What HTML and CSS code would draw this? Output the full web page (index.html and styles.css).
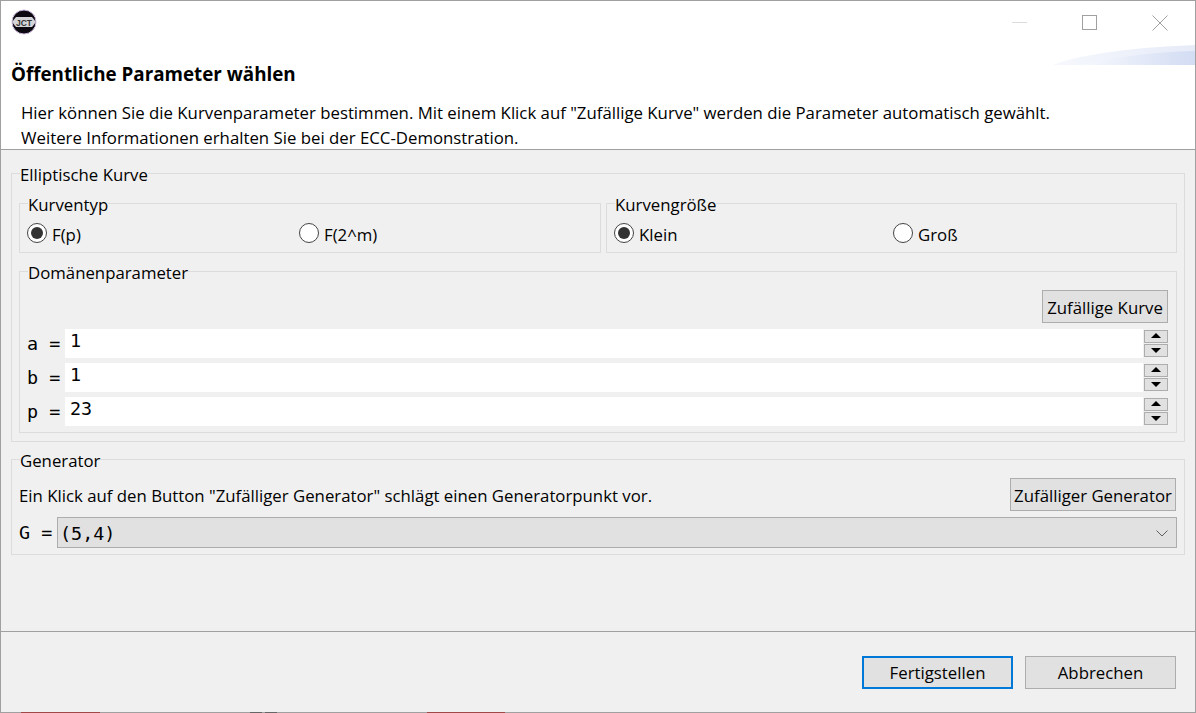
FILE: index.html
```html
<!DOCTYPE html>
<html lang="de">
<head>
  <meta charset="UTF-8">
  <title>Öffentliche Parameter wählen</title>
  <link rel="stylesheet" href="styles.css">
</head>
<body>
  <div class="window">
    <div class="top">
      <div class="titlebar">
        <svg class="logo" width="26" height="26" viewBox="0 0 26 26">
          <circle cx="13" cy="13" r="12" fill="#0c0a10" stroke="#cdb8e0" stroke-width="1"/>
          <path d="M1 13 L5 8 H21 L25 13 L21 18 H5 Z" fill="#d4d4d8"/>
          <text x="13" y="16.5" text-anchor="middle" class="logo-text">JCT</text>
        </svg>
        <div class="winbuttons">
          <svg width="16" height="16" viewBox="0 0 16 16"><path d="M0 7.5H15" stroke="#dcdcdc"/></svg>
          <svg width="16" height="16" viewBox="0 0 16 16"><rect x="0.5" y="0.5" width="14" height="14" fill="none" stroke="#a0a0a0"/></svg>
          <svg width="16" height="16" viewBox="0 0 16 16"><path d="M0.5 0.5L15.5 15.5M15.5 0.5L0.5 15.5" stroke="#a0a0a0"/></svg>
        </div>
      </div>
      <svg class="swoosh" width="142" height="21" viewBox="0 0 142 21">
        <defs>
          <linearGradient id="sw1"><stop offset="0" stop-color="#f6f8fd"/><stop offset="1" stop-color="#e6ebf8"/></linearGradient>
          <linearGradient id="sw2"><stop offset="0" stop-color="#f6f8fd"/><stop offset="1" stop-color="#d2dcf3"/></linearGradient>
        </defs>
        <path d="M0 20C30 8 90 2 142 0V20Z" fill="url(#sw1)"/>
        <path d="M30 20C60 12 100 7 142 6V20Z" fill="url(#sw2)"/>
      </svg>
      <h1 class="title">Öffentliche Parameter wählen</h1>
      <p class="desc">Hier können Sie die Kurvenparameter bestimmen. Mit einem Klick auf "Zufällige Kurve" werden die Parameter automatisch gewählt.<br>Weitere Informationen erhalten Sie bei der ECC-Demonstration.</p>
    </div>

    <div class="main">
      <fieldset class="group outer curve">
        <legend>Elliptische Kurve</legend>
        <div class="pair">
          <fieldset class="group kind">
            <legend>Kurventyp</legend>
            <div class="radios radios-type">
              <label class="radio"><span class="dot on"></span>F(p)</label>
              <label class="radio"><span class="dot"></span>F(2^m)</label>
            </div>
          </fieldset>
          <fieldset class="group size">
            <legend>Kurvengröße</legend>
            <div class="radios radios-size">
              <label class="radio"><span class="dot on"></span>Klein</label>
              <label class="radio"><span class="dot"></span>Groß</label>
            </div>
          </fieldset>
        </div>
        <fieldset class="group domain">
          <legend>Domänenparameter</legend>
          <div class="btn-row"><button class="btn btn-curve">Zufällige Kurve</button></div>
          <div class="param">
            <span class="mono name">a =</span>
            <div class="field mono">1</div>
            <div class="spin"><span class="arrow up"></span><span class="arrow down"></span></div>
          </div>
          <div class="param">
            <span class="mono name">b =</span>
            <div class="field mono">1</div>
            <div class="spin"><span class="arrow up"></span><span class="arrow down"></span></div>
          </div>
          <div class="param">
            <span class="mono name">p =</span>
            <div class="field mono">23</div>
            <div class="spin"><span class="arrow up"></span><span class="arrow down"></span></div>
          </div>
        </fieldset>
      </fieldset>

      <fieldset class="group outer generator">
        <legend>Generator</legend>
        <div class="gen-row">
          <span class="gen-text">Ein Klick auf den Button "Zufälliger Generator" schlägt einen Generatorpunkt vor.</span>
          <button class="btn btn-gen">Zufälliger Generator</button>
        </div>
        <div class="gen-select">
          <span class="mono gname">G =</span>
          <div class="combo mono">(5,4)
            <svg width="12" height="7" viewBox="0 0 12 7"><path d="M0.5 0.5L6 6L11.5 0.5" fill="none" stroke="#606060"/></svg>
          </div>
        </div>
      </fieldset>
    </div>

    <div class="footer">
      <button class="btn btn-foot btn-default">Fertigstellen</button>
      <button class="btn btn-foot">Abbrechen</button>
    </div>
    <div class="edge"></div>
  </div>
</body>
</html>
```

FILE: styles.css
```css
* {
  box-sizing: border-box;
}

body {
  margin: 0;
  height: 100vh;
  font-family: "Open Sans", sans-serif;
  font-size: 16.8px;
  color: #000;
}

.window {
  height: 713px;
  display: flex;
  flex-direction: column;
  border: 1px solid #a0a0a0;
  border-bottom: 0;
  background: #f0f0f0;
  overflow: hidden;
}

.top {
  position: relative;
  height: 149px;
  background: #fff;
  border-bottom: 1px solid #a0a0a0;
}

.titlebar {
  height: 47px;
  display: flex;
  justify-content: space-between;
  align-items: flex-start;
  padding: 8px 27px 0 10px;
}

.logo-text {
  font-family: "Liberation Sans", sans-serif;
  font-size: 8.5px;
  font-weight: bold;
  fill: #333;
}

.winbuttons {
  display: flex;
  gap: 54px;
  margin-top: 6px;
}

.swoosh {
  position: absolute;
  right: 0;
  top: 44px;
}

.title {
  margin: 14px 0 0;
  padding-left: 10px;
  font-size: 18.8px;
  font-weight: bold;
  line-height: 24px;
  position: relative;
}

.desc {
  margin: 14px 0 0;
  padding-left: 20px;
  line-height: 25px;
}

.main {
  flex: 1;
  padding: 12px 10px 0;
}

.group {
  margin: 0;
  padding: 0;
  min-width: 0;
  border: 1px solid #dcdcdc;
}

.group legend {
  padding: 3px 0 0;
  line-height: 20px;
  background: #f0f0f0;
}

.curve {
  padding: 7px 7px 8px;
}

.curve > legend,
.generator > legend {
  margin-left: 1px;
}

.kind > legend,
.size > legend {
  margin-left: 8px;
}

.pair {
  display: flex;
  gap: 5px;
}

.kind {
  width: 582px;
}

.size {
  flex: 1;
}

.radios {
  display: grid;
  padding: 8px 0 9px 7px;
}

.radios-type {
  grid-template-columns: 272px 1fr;
}

.radios-size {
  grid-template-columns: 279px 1fr;
}

.radio {
  display: flex;
  align-items: center;
  gap: 5px;
  height: 20px;
  padding-top: 2px;
}

.dot {
  flex: none;
  width: 20px;
  height: 20px;
  margin-top: -2px;
  border: 1px solid #444;
  border-radius: 50%;
  background: #fff;
  display: flex;
  align-items: center;
  justify-content: center;
}

.dot.on::after {
  content: "";
  width: 12px;
  height: 12px;
  border-radius: 50%;
  background: #333;
}

.domain {
  margin-top: 7px;
  padding: 7px 8px 6px;
}

.btn-row {
  display: flex;
  justify-content: flex-end;
  margin-bottom: 6px;
}

.btn {
  height: 33px;
  padding: 0;
  font: inherit;
  color: #000;
  background: #e1e1e1;
  border: 1px solid #adadad;
}

.btn-curve {
  width: 126px;
  padding-top: 2px;
}

.btn-gen {
  width: 166px;
  margin-right: 1px;
  padding-top: 2px;
}

.gen-text {
  padding-top: 2px;
}

.mono {
  font-family: "DejaVu Sans Mono", monospace;
  font-size: 18.4px;
}

.param {
  display: flex;
  height: 29px;
  margin-bottom: 5px;
}

.param:last-child {
  margin-bottom: 0;
}

.name {
  width: 38px;
  margin-left: -1px;
  line-height: 29px;
  white-space: nowrap;
}

.field {
  flex: 1;
  background: #fff;
  padding-left: 5px;
  line-height: 24px;
}

.spin {
  width: 25px;
  padding: 1px 0 0 1px;
}

.arrow {
  display: block;
  height: 13px;
  margin-bottom: 1px;
  background: #e1e1e1;
  border: 1px solid #adadad;
  position: relative;
}

.arrow::after {
  content: "";
  position: absolute;
  left: 6px;
  border-left: 5px solid transparent;
  border-right: 5px solid transparent;
}

.up::after {
  top: 2px;
  border-bottom: 5px solid #000;
}

.down::after {
  top: 3px;
  border-top: 5px solid #000;
}

.generator {
  margin-top: 6px;
  padding: 7px 7px 6px;
}

.gen-row {
  display: flex;
  justify-content: space-between;
  align-items: center;
  margin-bottom: 6px;
}

.gen-select {
  display: flex;
}

.gname {
  width: 38px;
  line-height: 31px;
  white-space: nowrap;
}

.combo {
  flex: 1;
  height: 31px;
  display: flex;
  justify-content: space-between;
  align-items: center;
  padding: 1px 8px 0 2px;
  background: #e1e1e1;
  border: 1px solid #adadad;
}

.footer {
  height: 81px;
  display: flex;
  justify-content: flex-end;
  gap: 12px;
  padding: 24px 19px 0 0;
  border-top: 1px solid #a0a0a0;
}

.btn-foot {
  width: 151px;
}

.btn-default {
  border: 2px solid #0078d7;
}

/* desktop behind the window shows through along the bottom line */
.edge {
  flex: none;
  height: 1px;
  background: linear-gradient(to right,
    #a0a0a0 20px, #a04848 20px, #a04848 99px, #a0a0a0 99px,
    #a0a0a0 249px, #666 249px, #666 261px, #a0a0a0 261px,
    #a0a0a0 264px, #666 264px, #666 276px, #a0a0a0 276px,
    #a0a0a0 426px, #a04848 426px, #a04848 504px, #a0a0a0 504px);
}
```
